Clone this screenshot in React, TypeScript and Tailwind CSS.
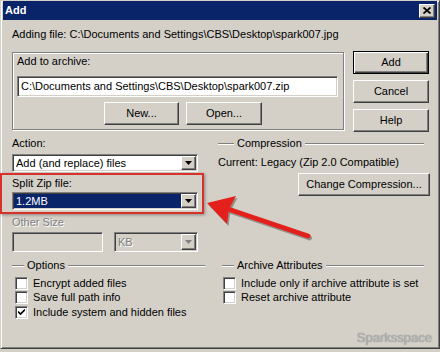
import React from "react";

const raised =
  "border border-t-white border-l-white border-r-[#404040] border-b-[#404040] shadow-[inset_-1px_-1px_0_#808080] bg-[#d4d0c8]";
const sunken =
  "border border-t-[#808080] border-l-[#808080] border-r-white border-b-white shadow-[inset_1px_1px_0_#404040,inset_-1px_-1px_0_#d4d0c8]";
const etched = "border border-[#808080] shadow-[inset_1px_1px_0_#fff,1px_1px_0_#fff]";

function Arrow({ disabled }: { disabled?: boolean }) {
  return (
    <div className={`${raised} flex h-full w-[15px] shrink-0 items-center justify-center`}>
      <svg width="7" height="4" viewBox="0 0 7 4">
        <path d="M0 0h7L3.5 4z" fill={disabled ? "#808080" : "#000"} />
      </svg>
    </div>
  );
}

function Header({ title, lead }: { title: string; lead: string }) {
  return (
    <div className="flex h-[13px] items-center">
      <div className={`${lead} h-[2px] border-t border-b border-t-[#808080] border-b-white`} />
      <span className="px-[3px] leading-[13px]">{title}</span>
      <div className="h-[2px] flex-1 border-t border-b border-t-[#808080] border-b-white" />
    </div>
  );
}

function Check({ label, checked, className }: { label: string; checked?: boolean; className?: string }) {
  return (
    <div className={`flex h-[13px] items-center ${className ?? ""}`}>
      <div className={`${sunken} flex h-[13px] w-[13px] items-center justify-center bg-white`}>
        {checked && (
          <svg width="7" height="7" viewBox="0 0 7 7">
            <path d="M0 2.5l2.5 2.5L7 0.5" stroke="#000" strokeWidth="1.6" fill="none" />
          </svg>
        )}
      </div>
      <span className="ml-[5px] leading-[13px]">{label}</span>
    </div>
  );
}

export default function App() {
  return (
    <div className="relative h-[352px] w-[440px] overflow-hidden bg-[#d4d0c8] font-['Liberation_Sans',Arial,sans-serif] text-[11px] text-black">
      <div className="h-[349px] border border-[#d4d0c8] border-r-[#404040] border-b-[#404040] px-[2px] shadow-[inset_1px_1px_0_#fff,inset_-1px_-1px_0_#808080]">
        {/* title bar */}
        <div className="flex h-[19px] items-center justify-between bg-[#0a246a] pl-[2px] pr-[2px]">
          <span className="font-bold text-white">Add</span>
          <div className={`${raised} flex h-[14px] w-[16px] items-center justify-center`}>
            <svg width="8" height="7" viewBox="0 0 8 7">
              <path d="M0.5 0.5l7 6M7.5 0.5l-7 6" stroke="#000" strokeWidth="1.7" />
            </svg>
          </div>
        </div>

        <div className="pl-[9px]">
          <div className="mt-[8px] leading-[13px]">
            Adding file: C:\Documents and Settings\CBS\Desktop\spark007.jpg
          </div>

          {/* archive row */}
          <div className="mt-[10px] flex">
            <div className={`${etched} mt-[1px] h-[78px] w-[332px] px-[4px] pt-[2px]`}>
              <div className="leading-[13px]">Add to archive:</div>
              <div className={`${sunken} mt-[8px] flex h-[21px] w-[321px] items-center bg-white px-[3px]`}>
                C:\Documents and Settings\CBS\Desktop\spark007.zip
              </div>
              <div className="mt-[5px] ml-[87px] flex gap-[7px]">
                <button className={`${raised} h-[23px] w-[75px]`}>New...</button>
                <button className={`${raised} h-[23px] w-[76px]`}>Open...</button>
              </div>
            </div>
            <div className="ml-[9px] flex w-[76px] flex-col gap-[6px]">
              <button className="h-[23px] border border-black bg-[#d4d0c8] shadow-[inset_1px_1px_0_#fff,inset_-1px_-1px_0_#404040,inset_-2px_-2px_0_#808080]">
                Add
              </button>
              <button className={`${raised} h-[23px]`}>Cancel</button>
              <button className={`${raised} h-[23px]`}>Help</button>
            </div>
          </div>

          {/* action / compression row */}
          <div className="mt-[5px] flex">
            <div className="flex w-[186px] flex-col">
              <div className="leading-[13px]">Action:</div>
              <div className={`${sunken} mt-[4px] flex h-[18px] items-stretch bg-white p-[1px]`}>
                <span className="flex-1 pl-[2px] leading-[14px]">Add (and replace) files</span>
                <Arrow />
              </div>
              <div className="mt-[5px] leading-[13px]">Split Zip file:</div>
              <div className={`${sunken} mt-[2px] flex h-[18px] items-stretch bg-white p-[1px]`}>
                <span className="flex-1 bg-[#0a246a] pl-[2px] leading-[14px] text-white">1.2MB</span>
                <Arrow />
              </div>
              <div className="mt-[6px] leading-[13px] text-[#808080] [text-shadow:1px_1px_0_#fff]">Other Size</div>
              <div className="mt-[3px] flex h-[20px]">
                <div className={`${sunken} w-[91px] bg-[#d4d0c8]`} />
                <div className={`${sunken} ml-[11px] flex flex-1 items-stretch bg-[#d4d0c8] p-[1px]`}>
                  <span className="flex-1 pl-[2px] leading-[16px] text-[#808080] [text-shadow:1px_1px_0_#fff]">KB</span>
                  <Arrow disabled />
                </div>
              </div>
            </div>
            <div className="ml-[20px] flex w-[212px] flex-col">
              <div className="mr-[6px]">
                <Header title="Compression" lead="w-[16px]" />
              </div>
              <div className="mt-[6px] leading-[13px]">Current: Legacy (Zip 2.0 Compatible)</div>
              <button className={`${raised} mt-[4px] h-[23px] w-[132px] self-end`}>Change Compression...</button>
            </div>
          </div>

          {/* options row */}
          <div className="mt-[7px] flex">
            <div className="w-[193px]">
              <Header title="Options" lead="w-[12px]" />
              <Check label="Encrypt added files" className="mt-[5px] ml-[3px]" />
              <Check label="Save full path info" className="mt-[1px] ml-[3px]" />
              <Check label="Include system and hidden files" checked className="mt-[2px] ml-[3px]" />
            </div>
            <div className="ml-[17px] w-[202px]">
              <Header title="Archive Attributes" lead="w-[12px]" />
              <Check label="Include only if archive attribute is set" className="mt-[5px] ml-[1px]" />
              <Check label="Reset archive attribute" className="mt-[1px] ml-[1px]" />
            </div>
          </div>
        </div>
      </div>

      {/* annotation overlays */}
      <div className="absolute top-[173px] left-0 h-[41px] w-[204px] border-2 border-[#d8312c] shadow-[1px_1px_3px_rgba(0,0,0,0.35)]" />
      <svg className="absolute top-[185px] left-[200px]" width="120" height="60" viewBox="200 185 120 60">
        <g transform="translate(1.5 2)" opacity="0.3">
          <path d="M207 203L236 196L229 209L227 224Z" fill="#000" />
          <path d="M228 209L308 236" stroke="#000" strokeWidth="5" strokeLinecap="round" />
        </g>
        <path d="M207 203L236 196L229 209L227 224Z" fill="#e3201b" />
        <path d="M228 209L308 236" stroke="#e3201b" strokeWidth="5" strokeLinecap="round" />
      </svg>
      <span className="absolute right-[8px] bottom-[5px] text-[13px] text-[#b4b4b4] [text-shadow:0_0_1px_#7a7a7a]">
        Sparksspace
      </span>
    </div>
  );
}
